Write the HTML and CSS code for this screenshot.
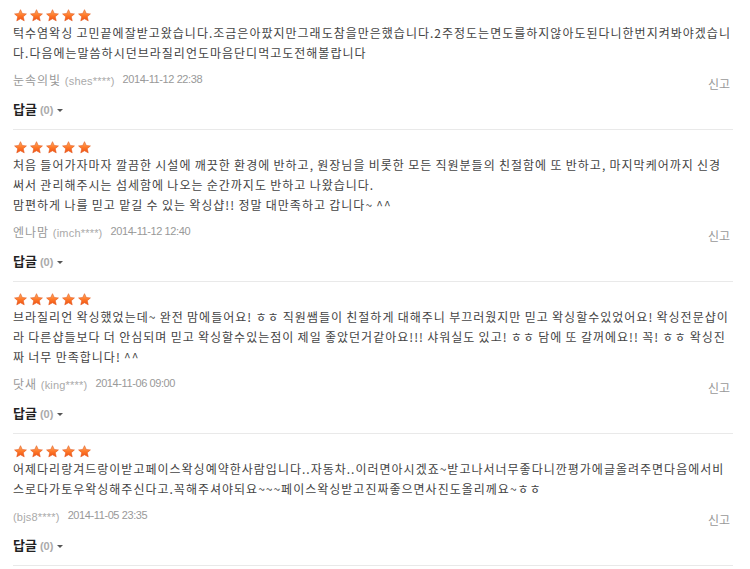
FILE: index.html
```html
<!DOCTYPE html>
<html>
  <head>
    <title>이용후기</title>
    <link rel="stylesheet" href="styles.css">
  </head>
  <body>
    <svg class="defs" width="0" height="0">
      <defs>
        <linearGradient id="starFill" x1="0" y1="0" x2="0" y2="1">
          <stop offset="0" stop-color="#ffb066"/>
          <stop offset="0.5" stop-color="#ff7a2a"/>
          <stop offset="1" stop-color="#ee4f12"/>
        </linearGradient>
        <symbol id="star" viewBox="0 0 24 23">
          <path d="M12 1.2l3.1 6.7 7.4.8-5.6 5 1.7 7.3L12 17.3l-6.6 3.7 1.7-7.3-5.6-5 7.4-.8z" fill="url(#starFill)" stroke="#e2561a" stroke-width="1" stroke-linejoin="round"/>
        </symbol>
      </defs>
    </svg>

    <ul class="review-list">
      <li class="review">
        <div class="stars">
          <svg class="star"><use href="#star"/></svg>
          <svg class="star"><use href="#star"/></svg>
          <svg class="star"><use href="#star"/></svg>
          <svg class="star"><use href="#star"/></svg>
          <svg class="star"><use href="#star"/></svg>
        </div>
        <p class="review-text">턱수염왁싱 고민끝에잘받고왔습니다.조금은아팠지만그래도참을만은했습니다.2주정도는면도를하지않아도된다니한번지켜봐야겠습니다.다음에는말씀하시던브라질리언도마음단디먹고도전해볼랍니다</p>
        <div class="meta">
          <span class="writer">눈속의빛 <span class="writer-id">(shes****)</span></span>
          <span class="date">2014-11-12 22:38</span>
          <a class="report" href="#">신고</a>
        </div>
        <div class="reply">
          <a href="#">답글 <span class="count">(0)</span> <span class="caret"></span></a>
        </div>
      </li>

      <li class="review">
        <div class="stars">
          <svg class="star"><use href="#star"/></svg>
          <svg class="star"><use href="#star"/></svg>
          <svg class="star"><use href="#star"/></svg>
          <svg class="star"><use href="#star"/></svg>
          <svg class="star"><use href="#star"/></svg>
        </div>
        <p class="review-text">처음 들어가자마자 깔끔한 시설에 깨끗한 환경에 반하고, 원장님을 비롯한 모든 직원분들의 친절함에 또 반하고, 마지막케어까지 신경써서 관리해주시는 섬세함에 나오는 순간까지도 반하고 나왔습니다.<br>맘편하게 나를 믿고 맡길 수 있는 왁싱샵!! 정말 대만족하고 갑니다~ ^^</p>
        <div class="meta">
          <span class="writer">엔나맘 <span class="writer-id">(imch****)</span></span>
          <span class="date">2014-11-12 12:40</span>
          <a class="report" href="#">신고</a>
        </div>
        <div class="reply">
          <a href="#">답글 <span class="count">(0)</span> <span class="caret"></span></a>
        </div>
      </li>

      <li class="review">
        <div class="stars">
          <svg class="star"><use href="#star"/></svg>
          <svg class="star"><use href="#star"/></svg>
          <svg class="star"><use href="#star"/></svg>
          <svg class="star"><use href="#star"/></svg>
          <svg class="star"><use href="#star"/></svg>
        </div>
        <p class="review-text">브라질리언 왁싱했었는데~ 완전 맘에들어요! ㅎㅎ 직원쌤들이 친절하게 대해주니 부끄러웠지만 믿고 왁싱할수있었어요! 왁싱전문샵이라 다른샵들보다 더 안심되며 믿고 왁싱할수있는점이 제일 좋았던거같아요!!! 샤워실도 있고! ㅎㅎ 담에 또 갈꺼에요!! 꼭! ㅎㅎ 왁싱진짜 너무 만족합니다! ^^</p>
        <div class="meta">
          <span class="writer">닷새 <span class="writer-id">(king****)</span></span>
          <span class="date">2014-11-06 09:00</span>
          <a class="report" href="#">신고</a>
        </div>
        <div class="reply">
          <a href="#">답글 <span class="count">(0)</span> <span class="caret"></span></a>
        </div>
      </li>

      <li class="review">
        <div class="stars">
          <svg class="star"><use href="#star"/></svg>
          <svg class="star"><use href="#star"/></svg>
          <svg class="star"><use href="#star"/></svg>
          <svg class="star"><use href="#star"/></svg>
          <svg class="star"><use href="#star"/></svg>
        </div>
        <p class="review-text">어제다리랑겨드랑이받고페이스왁싱예약한사람입니다..자동차..이러면아시겠죠~받고나서너무좋다니깐평가에글올려주면다음에서비스로다가토우왁싱해주신다고.꼭해주셔야되요~~~페이스왁싱받고진짜좋으면사진도올리께요~ㅎㅎ</p>
        <div class="meta">
          <span class="writer"> <span class="writer-id">(bjs8****)</span></span>
          <span class="date">2014-11-05 23:35</span>
          <a class="report" href="#">신고</a>
        </div>
        <div class="reply">
          <a href="#">답글 <span class="count">(0)</span> <span class="caret"></span></a>
        </div>
      </li>
    </ul>
  </body>
</html>
```

FILE: styles.css
```css
body {
  margin: 0;
  font-family: "Noto Sans CJK KR", sans-serif;
  font-size: 12px;
  color: #444;
  background: #fff;
}

a {
  text-decoration: none;
}

.defs {
  position: absolute;
}

.review-list {
  list-style-type: none;
  margin: 0 17px 0 13px;
  padding: 0;
}

.review {
  padding: 11px 0 9px;
  border-bottom: 1px solid #e9e9e9;
}

.review:first-child {
  padding-top: 9px;
}

.stars {
  display: flex;
  gap: 1px;
  height: 13px;
}

.star {
  width: 15px;
  height: 13px;
}

.review-text {
  margin: 1px 0 0;
  line-height: 20px;
  letter-spacing: 1px;
  word-spacing: -0.4px;
  color: #444;
}

.meta {
  display: flex;
  align-items: center;
  margin-top: 6px;
  height: 20px;
}

.writer {
  color: #999;
  font-size: 12px;
  letter-spacing: 1px;
}

.writer-id {
  font-family: "Liberation Sans", sans-serif;
  font-size: 11px;
  letter-spacing: 0.2px;
  color: #aaa;
}

.date {
  margin-left: 8px;
  font-family: "Liberation Sans", sans-serif;
  font-size: 11px;
  letter-spacing: -0.4px;
  color: #999;
}

.report {
  margin-left: auto;
  margin-right: 3px;
  padding-top: 8px;
  color: #999;
}

.reply {
  margin-top: 10px;
  line-height: 20px;
}

.reply a {
  color: #222;
  font-weight: bold;
  font-size: 13px;
}

.reply .count {
  font-family: "Liberation Sans", sans-serif;
  font-size: 11px;
  color: #aaa;
}

.caret {
  display: inline-block;
  width: 0;
  height: 0;
  margin-left: 1px;
  vertical-align: middle;
  border-left: 3px solid transparent;
  border-right: 3px solid transparent;
  border-top: 3px solid #555;
}
```
